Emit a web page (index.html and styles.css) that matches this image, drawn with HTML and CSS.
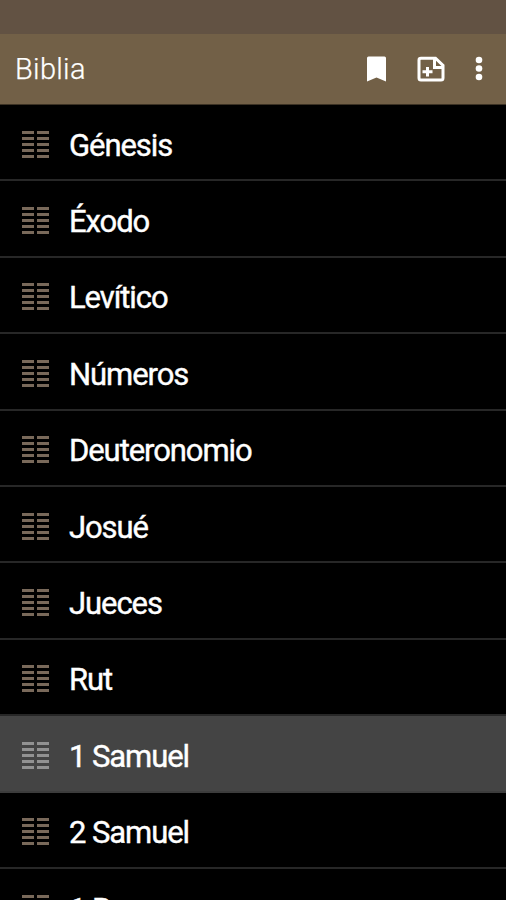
FILE: index.html
```html
<!DOCTYPE html>
<html lang="es">
<head>
<meta charset="utf-8">
<title>Biblia</title>
<link rel="stylesheet" href="styles.css">
</head>
<body>
<svg class="defs" aria-hidden="true">
  <symbol id="book" viewBox="0 0 27 28">
    <path d="M0 0h12v3H0zM15 0h12v3H15zM0 6h12v3H0zM15 6h12v3H15zM0 12h12v3H0zM15 12h12v3H15zM0 18h12v3H0zM15 18h12v3H15zM0 24h12v3H0zM15 24h12v3H15z"/>
  </symbol>
</svg>
<div class="screen">
  <div class="statusbar"></div>
  <header class="toolbar">
    <h1 class="title">Biblia</h1>
    <svg class="bookmark" viewBox="0 0 20 26"><path d="M0 2Q0 .5 1.500 .5H17.500Q19 .5 19 2V25.500L9.500 21.500L0 25.500Z"/></svg>
    <svg class="note" viewBox="0 0 28 26"><path class="outline" d="M4 2.200H18.500L26 9.500V22Q26 24 24 24H4Q2 24 2 22V4Q2 2.200 4 2.200Z"/><path class="outline" d="M17.500 2.500V11.500H26"/><path class="plus" d="M10.500 11V20.500M5.500 15.800H15.500"/></svg>
    <svg class="more" viewBox="0 0 8 26"><circle cx="4" cy="4" r="3.300"/><circle cx="4" cy="12.500" r="3.300"/><circle cx="4" cy="21" r="3.300"/></svg>
  </header>
  <ul class="books">
    <li class="row"><svg class="icon"><use href="#book"/></svg><span class="name">Génesis</span></li>
    <li class="row"><svg class="icon"><use href="#book"/></svg><span class="name">Éxodo</span></li>
    <li class="row"><svg class="icon"><use href="#book"/></svg><span class="name">Levítico</span></li>
    <li class="row"><svg class="icon"><use href="#book"/></svg><span class="name">Números</span></li>
    <li class="row"><svg class="icon"><use href="#book"/></svg><span class="name">Deuteronomio</span></li>
    <li class="row"><svg class="icon"><use href="#book"/></svg><span class="name">Josué</span></li>
    <li class="row"><svg class="icon"><use href="#book"/></svg><span class="name">Jueces</span></li>
    <li class="row"><svg class="icon"><use href="#book"/></svg><span class="name">Rut</span></li>
    <li class="row selected"><svg class="icon"><use href="#book"/></svg><span class="name">1 Samuel</span></li>
    <li class="row"><svg class="icon"><use href="#book"/></svg><span class="name">2 Samuel</span></li>
    <li class="row"><svg class="icon"><use href="#book"/></svg><span class="name">1 Reyes</span></li>
  </ul>
</div>
</body>
</html>
```
FILE: styles.css
```css
* { box-sizing: border-box; }
body { margin: 0; background: #000; font-family: Roboto, sans-serif; }
.defs { display: none; }
.screen { height: 900px; overflow: hidden; }
.statusbar { height: 34px; background: #625243; }
.toolbar {
  display: flex;
  align-items: center;
  height: 71px;
  padding: 0 23px 0 15px;
  background: #726047;
  border-bottom: 1px solid #3c3224;
}
.title {
  flex: 1;
  margin: 0;
  font-size: 29px;
  font-weight: 300;
  line-height: 34px;
  letter-spacing: 0.3px;
  color: #fff;
  -webkit-text-stroke: 0.25px #fff;
}
.toolbar svg { fill: #fff; }
.bookmark { width: 20px; height: 26px; margin-right: 30px; }
.note { width: 28px; height: 26px; margin-right: 30px; }
.more { width: 8px; height: 26px; }
.toolbar .outline { fill: none; stroke: #fff; stroke-width: 3; }
.toolbar .plus { fill: none; stroke: #fff; stroke-width: 3; }
.books { margin: 0; padding: 0; list-style: none; }
.row {
  display: flex;
  align-items: center;
  height: 76.4px;
  padding: 7px 21.500px 0;
  border-bottom: 2px solid #272727;
}
.icon { width: 27px; height: 28px; margin: 0 20.500px 2px 0; fill: #79695a; }
.name {
  font-size: 31px;
  line-height: 36px;
  letter-spacing: -1.080px;
  color: #fff;
  -webkit-text-stroke: 0.4px #fff;
}
.selected { background: #444; border-color: #3c3c3c; }
.selected .icon { fill: #929292; }
```
